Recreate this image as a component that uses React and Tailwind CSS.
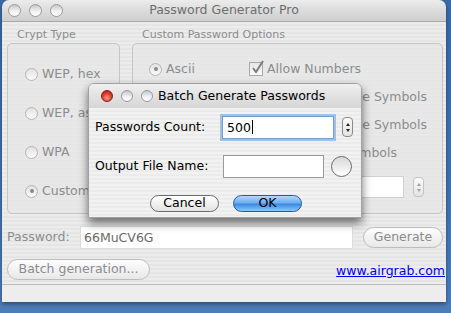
import React from "react";

const F = { fontFamily: '"DejaVu Sans", "Liberation Sans", sans-serif' };

function Light({ color = "gray", size = 13 }) {
  const red = color === "red";
  return (
    <div
      className={`rounded-full border ${red ? "border-[#8a1a12] bg-[radial-gradient(circle_at_50%_70%,#ff9a8a_0%,#e0402e_50%,#a01a10_100%)]" : "border-[#9a9a9a] bg-[linear-gradient(180deg,#c8c8c8_0%,#f4f4f4_60%,#ffffff_100%)]"}`}
      style={{ width: size, height: size }}
    />
  );
}

function Radio({ checked }) {
  return (
    <div className="w-[13px] h-[13px] rounded-full border border-[#b4b4b4] bg-[linear-gradient(180deg,#e2e2e2,#fafafa)] flex items-center justify-center shrink-0">
      {checked && <div className="w-[4px] h-[4px] rounded-full bg-[#8a8a8a]" />}
    </div>
  );
}

function Stepper({ dim }) {
  return (
    <div className={`w-[11px] h-[20px] rounded-[4px] border ${dim ? "border-[#c4c4c4]" : "border-[#8a8a8a]"} bg-[linear-gradient(180deg,#fafafa,#e4e4e4)] flex flex-col items-center justify-center gap-[3px]`}>
      <div className={`w-0 h-0 border-l-[2px] border-r-[2px] border-b-[3px] border-l-transparent border-r-transparent ${dim ? "border-b-[#a0a0a0]" : "border-b-[#222]"}`} />
      <div className={`w-0 h-0 border-l-[2px] border-r-[2px] border-t-[3px] border-l-transparent border-r-transparent ${dim ? "border-t-[#a0a0a0]" : "border-t-[#222]"}`} />
    </div>
  );
}

export default function App() {
  const stripes =
    "bg-[repeating-linear-gradient(180deg,#ececec_0px,#ececec_2px,#e5e5e5_2px,#e5e5e5_4px)]";
  return (
    <div
      className="relative w-[451px] h-[313px] overflow-hidden bg-[linear-gradient(180deg,#3c6aa6_0%,#4472ad_60%,#4d7db8_100%)]"
      style={F}
    >
      {/* Main window */}
      <div className="ml-[2px] w-[444px] h-[302px] rounded-t-[7px] overflow-hidden flex flex-col shadow-[0_2px_4px_rgba(0,0,0,0.4)]">
        {/* title bar */}
        <div className="relative h-[22px] shrink-0 bg-[linear-gradient(180deg,#ececec_0%,#dcdcdc_50%,#cfcfcf_100%)] border-b border-[#a8a8a8] flex items-center">
          <div className="flex items-center gap-[8px] pl-[6px]">
            <Light />
            <Light />
            <Light />
          </div>
          <div className="absolute inset-0 flex items-center justify-center text-[12.5px] text-[#6e6e6e]">
            Password Generator Pro
          </div>
        </div>
        {/* body */}
        <div className={`flex-1 flex flex-col ${stripes}`}>
          <div className="flex gap-[12px] pl-[5px] pt-[4px]">
            {/* Crypt Type */}
            <div className="flex flex-col w-[113px]">
              <div className="text-[11px] text-[#8c8c8c] pl-[10px] h-[17px] leading-[17px]">Crypt Type</div>
              <div className="h-[171px] rounded-[5px] border border-[#c6c6c6] bg-[#e6e6e6]/60 flex flex-col pl-[17px] pt-[23px] gap-[25px] text-[12.5px] text-[#8c8c8c]">
                <div className="flex items-center gap-[4px] h-[14px]"><Radio />WEP, hex</div>
                <div className="flex items-center gap-[4px] h-[14px]"><Radio />WEP, ascii</div>
                <div className="flex items-center gap-[4px] h-[14px]"><Radio />WPA</div>
                <div className="flex items-center gap-[4px] h-[14px]"><Radio checked />Custom</div>
              </div>
            </div>
            {/* Custom options */}
            <div className="flex flex-col w-[311px]">
              <div className="text-[11px] text-[#8c8c8c] pl-[10px] h-[17px] leading-[17px]">Custom Password Options</div>
              <div className="relative h-[171px] rounded-[5px] border border-[#c6c6c6] bg-[#e6e6e6]/60 text-[12.5px] text-[#8c8c8c]">
                <div className="flex items-center gap-[4px] absolute left-[16px] top-[18px] h-[14px]"><Radio checked />Ascii</div>
                <div className="absolute left-[116px] top-[18px] flex items-center gap-[4px] h-[14px]">
                  <div className="w-[14px] h-[14px] border border-[#a8a8a8] bg-[linear-gradient(180deg,#e6e6e6,#fafafa)] relative">
                    <svg viewBox="0 0 14 14" className="absolute -top-[4px] left-[1px] w-[14px] h-[16px]"><path d="M2 8 L5 12 L12 1" fill="none" stroke="#7c7c7c" strokeWidth="2" /></svg>
                  </div>
                  Allow Numbers
                </div>
                <div className="absolute left-[120px] right-0 top-[46px] flex flex-col gap-[14px]">
                  <div className="flex justify-end items-center h-[14px] pr-[15px]">Allow Uppercase Symbols</div>
                  <div className="flex justify-end items-center h-[14px] pr-[15px]">Allow Lowercase Symbols</div>
                  <div className="flex justify-end items-center h-[14px] pr-[45px]">Allow Symbols</div>
                </div>
                <div className="absolute left-[150px] top-[132px] flex items-center gap-[9px]">
                  <div className="w-[121px] h-[22px] bg-white border border-[#d0d0d0]" />
                  <Stepper dim />
                </div>
              </div>
            </div>
          </div>
          {/* password row */}
          <div className="flex items-center mt-[12px] pl-[5px] h-[23px]">
            <div className="w-[73px] text-[12.5px] text-[#8c8c8c]">Password:</div>
            <div className="w-[273px] h-[23px] bg-white border border-[#dcdcdc] text-[12.5px] text-[#6a6a6a] pl-[3px] leading-[21px]">66MuCV6G</div>
            <div className="ml-[10px] w-[80px] h-[21px] rounded-full border border-[#bdbdbd] bg-[linear-gradient(180deg,#fdfdfd,#e8e8e8)] flex items-center justify-center text-[12.5px] text-[#8c8c8c]">Generate</div>
          </div>
          <div className="flex items-center justify-between mt-[10px] pl-[5px] pr-[1px] h-[21px]">
            <div className="w-[143px] h-[21px] rounded-full border border-[#bdbdbd] bg-[linear-gradient(180deg,#fdfdfd,#e8e8e8)] flex items-center justify-center text-[12.5px] text-[#8c8c8c]">Batch generation...</div>
            <div className="text-[12.5px] text-[#0000ee] underline mt-[3px]">www.airgrab.com</div>
          </div>
          <div className="mt-[4px] border-t border-[#bdbdbd] flex-1 bg-[#ededed]" />
        </div>
      </div>

      {/* Dialog */}
      <div className="absolute left-[88px] top-[83px] w-[274px] h-[135px] rounded-t-[6px] overflow-hidden flex flex-col border border-[#a0a0a0] shadow-[0_5px_10px_rgba(0,0,0,0.55)]">
        <div className="h-[24px] shrink-0 bg-[linear-gradient(180deg,#f0f0f0_0%,#e2e2e2_50%,#d6d6d6_100%)] flex items-center pl-[12px] gap-[8px]">
          <Light color="red" size={12} />
          <Light size={12} />
          <Light size={12} />
          <div className="text-[12.5px] text-black -ml-[3px]">Batch Generate Passwords</div>
        </div>
        <div className={`flex-1 flex flex-col bg-[repeating-linear-gradient(180deg,#f2f2f2_0px,#f2f2f2_2px,#ebebeb_2px,#ebebeb_4px)]`}>
          <div className="flex items-center mt-[7px] h-[24px] pl-[6px]">
            <div className="w-[127px] text-[12.5px] text-black">Passwords Count:</div>
            <div className="w-[112px] h-[23px] bg-white border border-[#7a9cc9] shadow-[0_0_0_2px_#9fc0e8] text-[12.5px] text-black pl-[4px] leading-[21px] flex items-center">
              500<span className="inline-block w-[1px] h-[14px] bg-black ml-[1px]" />
            </div>
            <div className="ml-[8px]"><Stepper /></div>
          </div>
          <div className="flex items-center mt-[16px] h-[23px] pl-[6px]">
            <div className="w-[128px] text-[12.5px] text-black">Output File Name:</div>
            <div className="w-[101px] h-[23px] bg-white border border-[#9a9a9a]" />
            <div className="ml-[7px] w-[21px] h-[21px] rounded-full border border-[#6a6a6a] bg-[linear-gradient(180deg,#d8d8d8,#ffffff)]" />
          </div>
          <div className="flex items-center mt-[17px] pl-[61px] gap-[14px]">
            <div className="w-[69px] h-[17px] rounded-full border border-[#6a6a6a] bg-[linear-gradient(180deg,#ffffff,#e2e2e2)] flex items-center justify-center text-[12.5px] text-black">Cancel</div>
            <div className="w-[69px] h-[17px] rounded-full border border-[#2a5a9a] bg-[linear-gradient(180deg,#b4d8fa_0%,#6eaef0_45%,#3a8ae0_55%,#8cc8fa_100%)] flex items-center justify-center text-[12.5px] text-black">OK</div>
          </div>
        </div>
      </div>
    </div>
  );
}
